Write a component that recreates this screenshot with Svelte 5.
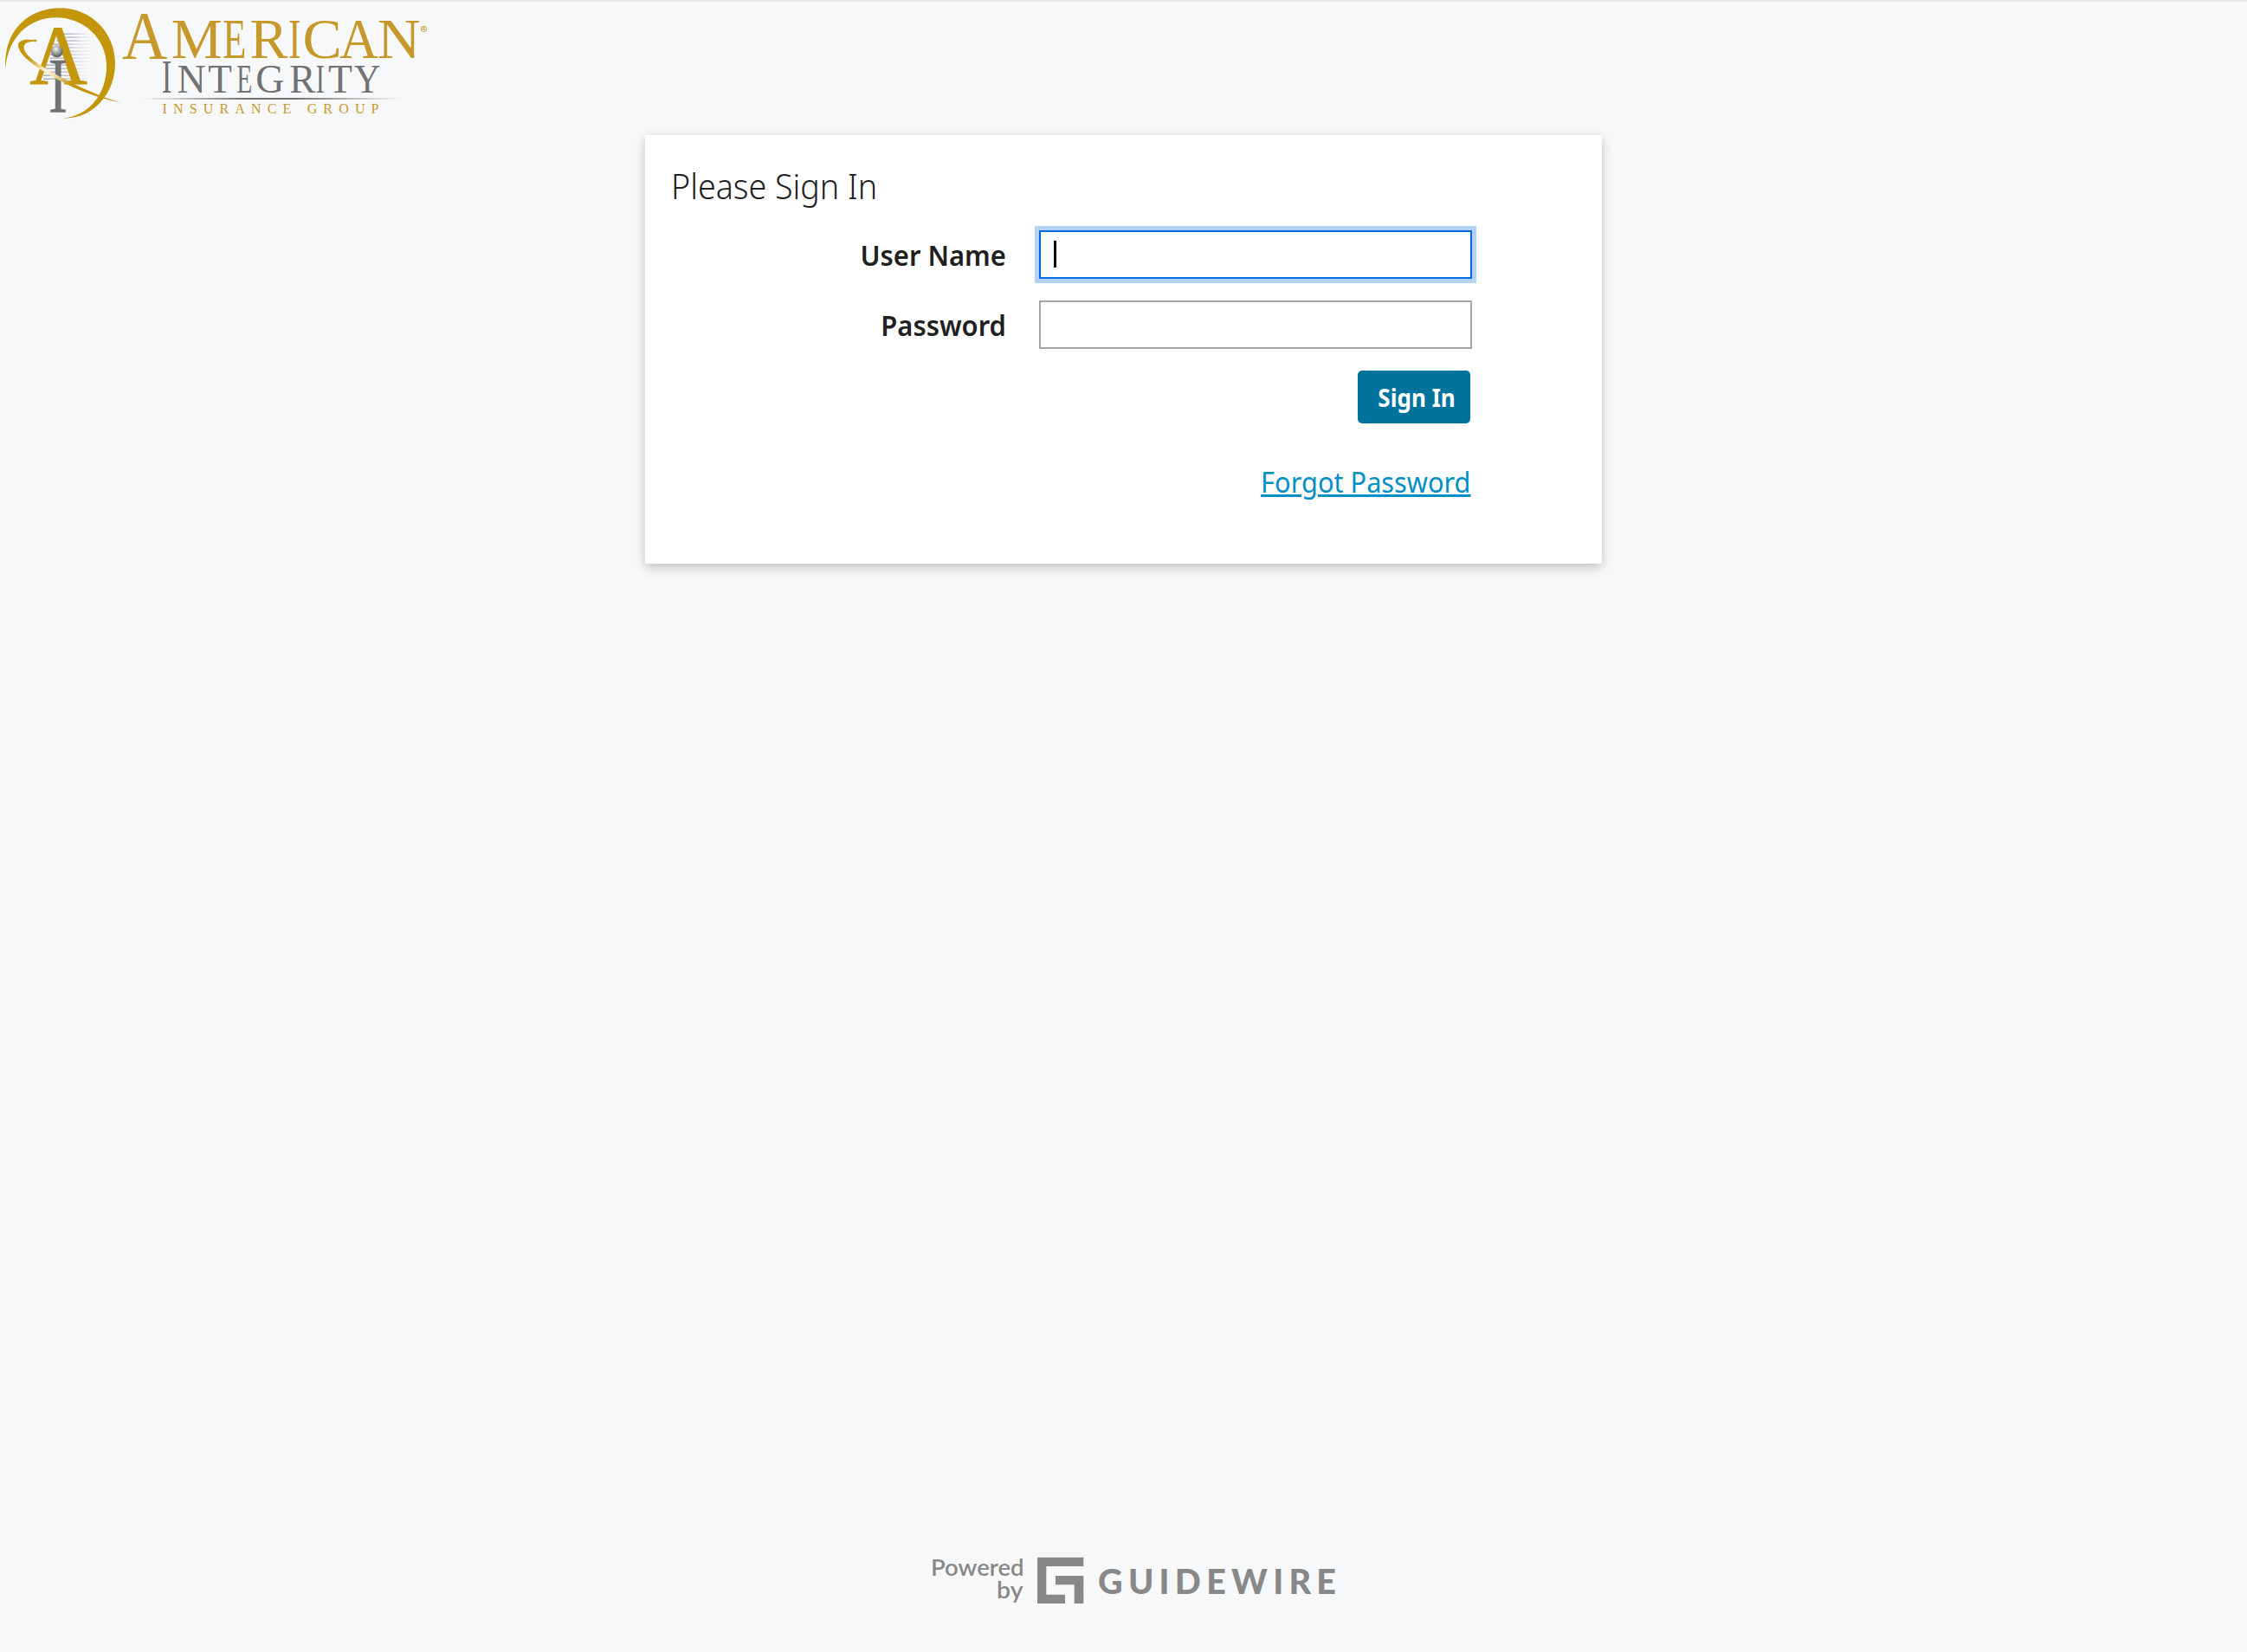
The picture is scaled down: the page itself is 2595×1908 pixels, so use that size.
<script>
  // Side bearings and advance of the serif capitals, in 1/1000 em
  const metrics = {
    A: [15, 706, 722], C: [28, 633, 667], E: [12, 597, 611], G: [32, 709, 722],
    I: [18, 315, 333], M: [12, 863, 889], N: [12, 707, 722], R: [17, 659, 667],
    T: [17, 593, 611], Y: [22, 703, 722], Λ: [15, 706, 722]
  };

  // Fits a capital between the horizontal positions a and b
  function fit([ch, a, b, size]) {
    const [l, r, adv] = metrics[ch];
    const k = (b - a) / (r - l);
    return { ch, x: a - l * k, len: adv * k, size };
  }

  const american = [
    ['A', 142, 192, 79], ['M', 198.5, 255, 65.5], ['E', 257.7, 283.7, 65.5], ['R', 289.7, 332, 65.5],
    ['I', 333.7, 346.7, 65.5], ['C', 351.3, 392.3, 65.5], ['A', 393, 436, 65.5], ['N', 436.7, 484.7, 65.5]
  ].map(fit);

  const integrity = [
    ['I', 187.3, 197.7, 54], ['N', 205, 237, 46.5], ['T', 241, 267, 46.5], ['E', 273.7, 291, 46.5],
    ['G', 296.7, 327.7, 46.5], ['R', 335, 364, 46.5], ['I', 365.3, 374.3, 46.5], ['T', 379.7, 406, 46.5],
    ['Y', 409.7, 438.7, 46.5]
  ].map(fit);

  const [markA, markI] = [['Λ', 107, 299, 295], ['I', 172, 230, 273]].map(fit);
  const stripes = Array.from({ length: 14 }, (_, i) => 115 + i * 12);

  let user = $state('');
  let password = $state('');
</script>

<div class="page">
  <header>
    <svg class="logo" viewBox="0 0 510 150" role="img" aria-label="American Integrity Insurance Group">
      <defs>
        <linearGradient id="rule"><stop offset="0" stop-color="#707274" stop-opacity="0" /><stop offset=".4" stop-color="#707274" /><stop offset=".6" stop-color="#707274" /><stop offset="1" stop-color="#707274" stop-opacity="0" /></linearGradient>
        <linearGradient id="fade"><stop offset="0" stop-color="#b4b5b9" /><stop offset=".4" stop-color="#c9cacd" /><stop offset="1" stop-color="#f7f9fb" stop-opacity="0" /></linearGradient>
        <linearGradient id="swoosh" gradientUnits="userSpaceOnUse" x1="100" y1="200" x2="240" y2="300"><stop offset="0" stop-color="#c4960c" /><stop offset=".42" stop-color="#fff8e0" /><stop offset=".58" stop-color="#f4e6bb" /><stop offset="1" stop-color="#c4960c" /></linearGradient>
        <radialGradient id="orb" cx=".42" cy=".32" r=".68"><stop offset="0" stop-color="#f4f4f4" /><stop offset=".45" stop-color="#aaa" /><stop offset="1" stop-color="#555" /></radialGradient>
      </defs>
      <g transform="scale(.33333)">
        {#each stripes as y}
          <rect x={y > 215 ? 150 : y > 150 ? 172 : 196} {y} width={y > 215 ? 195 : y > 150 ? 173 : 149} height="5" fill="url(#fade)" />
        {/each}
        <path fill="#c4960c" d="M19 240C10 105 100 28 208 28C315 28 399 112 399 220C399 330 315 416 219 409C308 402 369 325 369 230C369 132 288 61 195 61C100 61 26 130 19 240Z" />
        <text x={markA.x} y="291" font-size={markA.size} textLength={markA.len} lengthAdjust="spacingAndGlyphs" fill="#c4960c" stroke="#c4960c" stroke-width="2.5">{markA.ch}</text>
        <text x={markI.x} y="389" font-size={markI.size} textLength={markI.len} lengthAdjust="spacingAndGlyphs" fill="#707173" stroke="#707173" stroke-width="2">{markI.ch}</text>
        <circle cx="197" cy="178" r="21" fill="url(#orb)" />
        <path fill="url(#swoosh)" d="M130 141L118 135L120 139C92 135 60 137 63 160C67 190 115 226 165 256C245 304 335 340 418 356C340 332 262 297 190 256C142 228 87 196 83 167C81 148 98 144 120 143L118 147Z" />
      </g>
      <text y="67" fill="#c7982b">
        {#each american as g}<tspan x={g.x} font-size={g.size} textLength={g.len} lengthAdjust="spacingAndGlyphs">{g.ch}</tspan>{/each}
      </text>
      <circle cx="489.5" cy="33.4" r="3.2" fill="none" stroke="#c7982b" stroke-width=".9" />
      <text x="487.6" y="35.4" font-size="5.5" font-weight="bold" fill="#c7982b">R</text>
      <text y="107" fill="#707274">
        {#each integrity as g}<tspan x={g.x} font-size={g.size} textLength={g.len} lengthAdjust="spacingAndGlyphs">{g.ch}</tspan>{/each}
      </text>
      <rect x="163" y="113" width="300" height="2" fill="url(#rule)" />
      <text x="187.5" y="131" font-size="16" textLength="250" fill="#c7982b">INSURANCE GROUP</text>
    </svg>
  </header>

  <main>
    <h1><span>Please Sign In</span></h1>
    <form onsubmit={(e) => e.preventDefault()}>
      <label for="user"><span>User Name</span></label>
      <div class="field focused">
        <input id="user" bind:value={user} />
        <span class="caret"></span>
      </div>
      <label for="pass"><span>Password</span></label>
      <div class="field"><input id="pass" type="password" bind:value={password} /></div>
      <div class="actions">
        <button type="submit"><span>Sign In</span></button>
        <a href="#forgot">Forgot Password</a>
      </div>
    </form>
  </main>

  <footer>
    <svg viewBox="0 0 500 80" role="img" aria-label="Powered by Guidewire">
      <g fill="#888">
        <text x="15" y="40.3" font-size="26.5" font-weight="600" textLength="107.5" lengthAdjust="spacingAndGlyphs">Powered</text>
        <text x="91" y="65.7" font-size="26.5" font-weight="600" textLength="30.5" lengthAdjust="spacingAndGlyphs">by</text>
        <path transform="translate(138 18.7) scale(.3333)" d="M0 0H160V31H31V129H96V160H0ZM63 64H160V160H128V95H63Z" />
        <text x="208" y="61.2" font-size="39.5" font-weight="900" textLength="275">GUIDEWIRE</text>
      </g>
    </svg>
  </footer>
</div>

<style>
  :global(body) { background: #f7f8fa; }
  .page {
    box-sizing: border-box;
    height: 1908px;
    border-top: 2px solid #e6e7e9;
    display: flex;
    flex-direction: column;
    align-items: center;
    font-family: 'Noto Sans', sans-serif;
    color: #202020;
  }
  header { align-self: stretch; height: 154px; }
  .logo {
    display: block;
    overflow: visible;
    width: 510px;
    height: 150px;
    margin-top: -2px;
    font-family: 'Liberation Serif', serif;
  }
  main {
    box-sizing: border-box;
    width: 1105px;
    height: 495px;
    padding: 32px 150px 0 30px;
    background: #fff;
    box-shadow: 0 5px 12px rgba(0, 0, 0, .18), 0 0 10px rgba(0, 0, 0, .06);
  }
  h1 {
    margin: 0;
    font-size: 40px;
    line-height: 54px;
    font-weight: 300;
  }
  h1 span, label span, button span { display: inline-block; }
  h1 span { transform: scaleX(.94); transform-origin: left; }
  form {
    display: grid;
    grid-template-columns: 387px 500px;
    column-gap: 38px;
    row-gap: 25px;
    padding-top: 24px;
    align-items: center;
  }
  label {
    text-align: right;
    font-size: 32.5px;
    line-height: 57px;
    height: 56px;
    font-weight: 600;
  }
  label span { transform: scaleX(.952); transform-origin: right; }
  .field { position: relative; height: 56px; }
  input {
    box-sizing: border-box;
    width: 100%;
    height: 100%;
    padding: 0 16px;
    border: 2px solid #a0a7ab;
    outline: none;
    background: #fff;
    font: 32.5px 'Noto Sans', sans-serif;
  }
  .focused input { border-color: #0468de; box-shadow: 0 0 0 5px #b3d2f4; }
  .caret {
    position: absolute;
    left: 17px;
    top: 12px;
    width: 3px;
    height: 31px;
    background: #000;
  }
  .actions {
    grid-column: 2;
    display: flex;
    flex-direction: column;
    align-items: flex-end;
    padding-right: 2px;
  }
  button {
    width: 130px;
    height: 61px;
    padding: 1px 0 0 6px;
    border: 0;
    border-radius: 5px;
    background: #00739d;
    color: #fff;
    font: bold 28px 'Noto Sans', sans-serif;
  }
  button span { transform: scaleX(.93); }
  a {
    margin-top: 45px;
    font-size: 32.5px;
    line-height: 45px;
    color: #008fc5;
    transform: scaleX(.945);
    transform-origin: right;
  }
  footer { margin-top: auto; height: 128px; width: 475px; }
  footer svg { display: block; width: 500px; height: 80px; font-family: Lato, sans-serif; }
</style>
